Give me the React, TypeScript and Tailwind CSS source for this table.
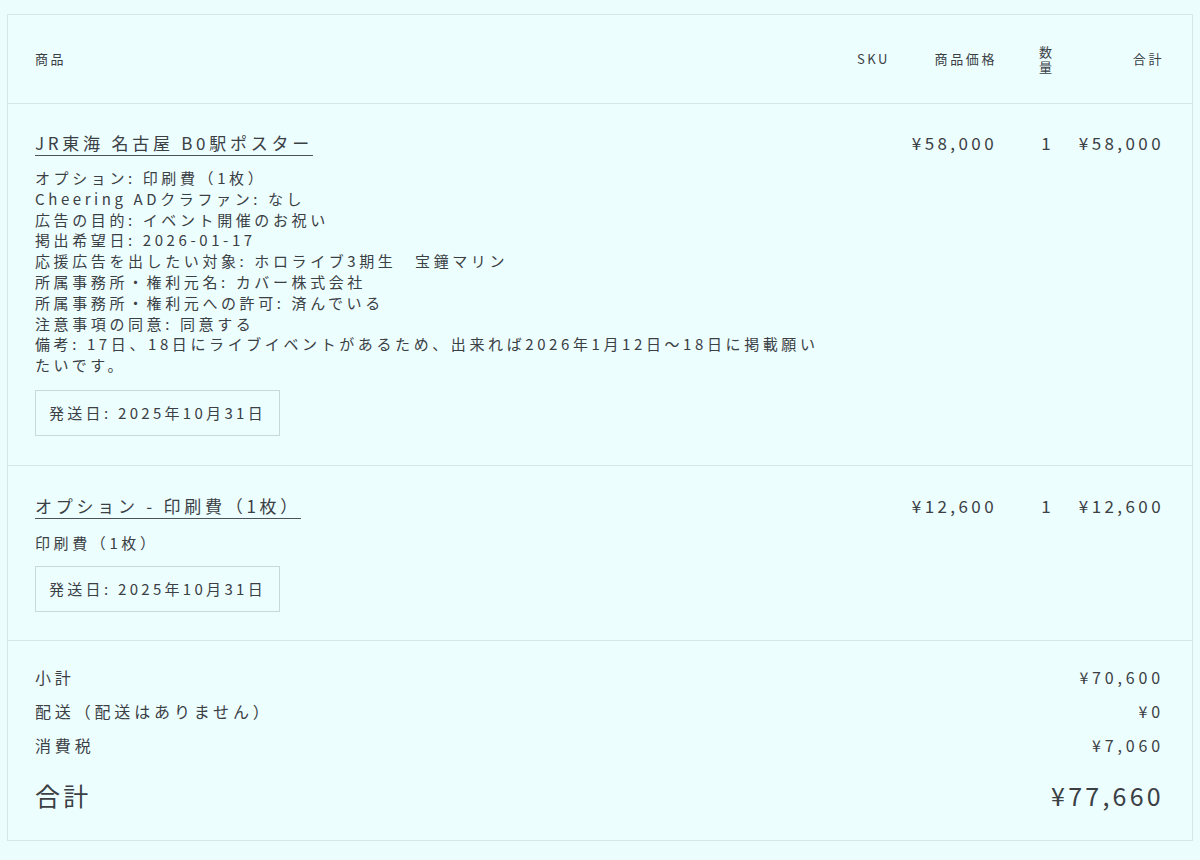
import React from 'react';

const details = [
  'オプション: 印刷費（1枚）',
  'Cheering ADクラファン: なし',
  '広告の目的: イベント開催のお祝い',
  '掲出希望日: 2026-01-17',
  '応援広告を出したい対象: ホロライブ3期生　宝鐘マリン',
  '所属事務所・権利元名: カバー株式会社',
  '所属事務所・権利元への許可: 済んでいる',
  '注意事項の同意: 同意する',
];

const ShipDate = ({ className }: { className: string }) => (
  <div className={`${className} inline-block border border-[#c9d8d8] px-[13px] py-[11px] text-[15px] leading-[22px] tracking-[0.22em]`}>
    発送日: 2025年10月31日
  </div>
);

const Row = ({
  title,
  price,
  children,
  className,
}: {
  title: string;
  price: string;
  children: React.ReactNode;
  className: string;
}) => (
  <div className={`flex items-start pl-[27px] pr-[28px] ${className} border-b border-[#d5e8e8]`}>
    <div className="flex-1 min-w-0">
      <span className="inline-block border-b border-[#4d5358] text-[17px] leading-[25px] tracking-[0.22em]">
        {title}
      </span>
      {children}
    </div>
    <div className="w-[60px]" />
    <div className="w-[107px] text-right text-[17px] leading-[25px] tracking-[0.2em]">{price}</div>
    <div className="ml-[30px] w-[38px] text-center text-[17px] leading-[25px]">1</div>
    <div className="w-[99px] text-right text-[17px] leading-[25px] tracking-[0.2em]">{price}</div>
  </div>
);

export default function App() {
  return (
    <div className="min-h-screen bg-[#ebfdfd] px-[7px] pt-[14px] pb-[20px] font-['Noto_Sans_CJK_JP',sans-serif] text-[#3b4045]">
      <div className="border border-[#d5e8e8] bg-[#ecfefe]">
        {/* header */}
        <div className="flex h-[89px] items-center border-b border-[#d5e8e8] pl-[27px] pr-[28px] text-[13px] tracking-[0.2em]">
          <div className="flex-1">商品</div>
          <div className="w-[60px] text-right">SKU</div>
          <div className="w-[107px] text-right">商品価格</div>
          <div className="ml-[30px] w-[38px]">
            <div className="mx-auto w-[14px] leading-[15px] tracking-normal">数量</div>
          </div>
          <div className="w-[99px] text-right">合計</div>
        </div>

        <Row title="JR東海 名古屋 B0駅ポスター" price="¥58,000" className="pt-[26px] pb-[29px]">
          <div className="mt-[12px] text-[15px] leading-[20.8px] tracking-[0.24em]">
            {details.map((d) => (
              <div key={d}>{d}</div>
            ))}
            <div>
              備考: 17日、18日にライブイベントがあるため、出来れば2026年1月12日〜18日に掲載願い
              <br />
              たいです。
            </div>
          </div>
          <ShipDate className="mt-[14px]" />
        </Row>

        <Row title="オプション - 印刷費（1枚）" price="¥12,600" className="pt-[27px] pb-[28px]">
          <div className="mt-[14px] text-[15px] leading-[20.8px] tracking-[0.24em]">印刷費（1枚）</div>
          <ShipDate className="mt-[12px]" />
        </Row>

        {/* totals */}
        <div className="pl-[27px] pr-[28px] pt-[19px] pb-[27px]">
          <div className="text-[16px] leading-[34px] tracking-[0.24em]">
            <div className="flex justify-between">
              <span>小計</span>
              <span>¥70,600</span>
            </div>
            <div className="flex justify-between">
              <span>配送（配送はありません）</span>
              <span>¥0</span>
            </div>
            <div className="flex justify-between">
              <span>消費税</span>
              <span>¥7,060</span>
            </div>
          </div>
          <div className="mt-[15px] flex justify-between text-[25px] leading-[36px] tracking-[0.13em]">
            <span>合計</span>
            <span>¥77,660</span>
          </div>
        </div>
      </div>
    </div>
  );
}
